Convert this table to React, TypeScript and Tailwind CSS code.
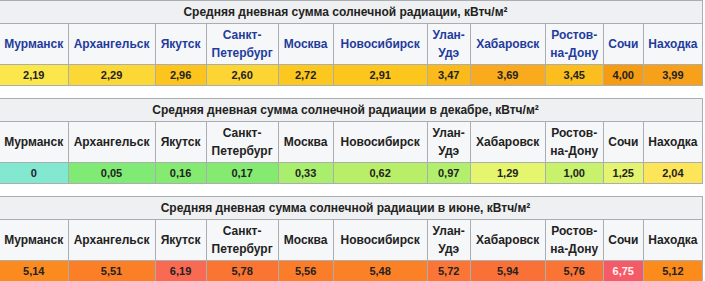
const WIDTHS = [68, 87, 51, 72, 55, 94, 43, 75, 58, 40, 59];

const CITIES: React.ReactNode[] = [
  "Мурманск",
  "Архангельск",
  "Якутск",
  <>Санкт-<br />Петербург</>,
  "Москва",
  "Новосибирск",
  <>Улан-<br />Удэ</>,
  "Хабаровск",
  <>Ростов-<br />на-Дону</>,
  "Сочи",
  "Находка",
];

type Cell = { v: string; bg: string; light?: boolean };

const TABLES: { title: string; link: boolean; cells: Cell[] }[] = [
  {
    title: "Средняя дневная сумма солнечной радиации, кВтч/м²",
    link: true,
    cells: [
      { v: "2,19", bg: "bg-[#fbe64c]" },
      { v: "2,29", bg: "bg-[#fcd836]" },
      { v: "2,96", bg: "bg-[#fcc41c]" },
      { v: "2,60", bg: "bg-[#fcd434]" },
      { v: "2,72", bg: "bg-[#fcc71f]" },
      { v: "2,91", bg: "bg-[#fcc61d]" },
      { v: "3,47", bg: "bg-[#fbba1b]" },
      { v: "3,69", bg: "bg-[#f9aa1d]" },
      { v: "3,45", bg: "bg-[#fbbe1e]" },
      { v: "4,00", bg: "bg-[#f59c12]" },
      { v: "3,99", bg: "bg-[#f7a11a]" },
    ],
  },
  {
    title: "Средняя дневная сумма солнечной радиации в декабре, кВтч/м²",
    link: false,
    cells: [
      { v: "0", bg: "bg-[#82e8d0]" },
      { v: "0,05", bg: "bg-[#7fea74]" },
      { v: "0,16", bg: "bg-[#84ea70]" },
      { v: "0,17", bg: "bg-[#84ea70]" },
      { v: "0,33", bg: "bg-[#a9ee6c]" },
      { v: "0,62", bg: "bg-[#b9ef68]" },
      { v: "0,97", bg: "bg-[#b2ef6c]" },
      { v: "1,29", bg: "bg-[#e6f56e]" },
      { v: "1,00", bg: "bg-[#c8f16c]" },
      { v: "1,25", bg: "bg-[#e4f46e]" },
      { v: "2,04", bg: "bg-[#fde55a]" },
    ],
  },
  {
    title: "Средняя дневная сумма солнечной радиации в июне, кВтч/м²",
    link: false,
    cells: [
      { v: "5,14", bg: "bg-[#fb8b1e]" },
      { v: "5,51", bg: "bg-[#fb7f27]" },
      { v: "6,19", bg: "bg-[#f86b52]" },
      { v: "5,78", bg: "bg-[#fa7531]" },
      { v: "5,56", bg: "bg-[#fb7d2a]" },
      { v: "5,48", bg: "bg-[#fb8127]" },
      { v: "5,72", bg: "bg-[#fa7536]" },
      { v: "5,94", bg: "bg-[#fa7138]" },
      { v: "5,76", bg: "bg-[#fa7535]" },
      { v: "6,75", bg: "bg-[#f45b66]", light: true },
      { v: "5,12", bg: "bg-[#fb8c1b]" },
    ],
  },
];

function RadiationTable({ title, link, cells }: (typeof TABLES)[number]) {
  return (
    <table className="w-[703px] table-fixed border-collapse border border-l-0 border-[#aaadb2] mb-[12px]">
      <colgroup>
        {WIDTHS.map((w, i) => (
          <col key={i} style={{ width: w }} />
        ))}
      </colgroup>
      <thead>
        <tr>
          <th
            colSpan={11}
            className="h-[23px] bg-[#eff0f1] border border-l-0 border-[#aaadb2] text-center text-[12px] font-bold text-[#222] leading-[16px] py-0 pl-0 pr-[11px]"
          >
            {title}
          </th>
        </tr>
        <tr>
          {CITIES.map((c, i) => (
            <th
              key={i}
              className={`h-[41px] bg-[#f6f7f8] border border-[#aaadb2] ${i === 0 ? "border-l-0" : ""} text-center text-[12px] font-bold leading-[18px] px-0 py-0 ${link ? "text-[#1f3c9c]" : "text-[#222]"}`}
            >
              {c}
            </th>
          ))}
        </tr>
      </thead>
      <tbody>
        <tr>
          {cells.map((c, i) => (
            <td
              key={i}
              className={`h-[21px] ${c.bg} border border-[#aaadb2] ${i === 0 ? "border-l-0" : ""} text-center text-[11px] font-bold leading-[14px] p-0 ${c.light ? "text-[#fff3f3]" : "text-[#222]"}`}
            >
              {c.v}
            </td>
          ))}
        </tr>
      </tbody>
    </table>
  );
}

export default function App() {
  return (
    <div className="w-[705px] h-[281px] overflow-hidden bg-white font-['Liberation_Sans',Arial,sans-serif]">
      {TABLES.map((t, i) => (
        <RadiationTable key={i} {...t} />
      ))}
    </div>
  );
}
